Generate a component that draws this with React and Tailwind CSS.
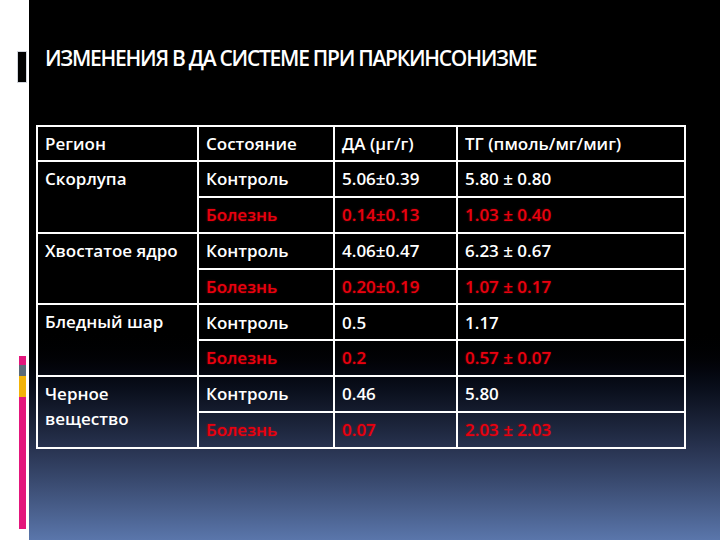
const rows = [
  { region: "Скорлупа", ctrl: ["5.06±0.39", "5.80 ± 0.80"], sick: ["0.14±0.13", "1.03 ± 0.40"] },
  { region: "Хвостатое ядро", ctrl: ["4.06±0.47", "6.23 ± 0.67"], sick: ["0.20±0.19", "1.07 ± 0.17"] },
  { region: "Бледный шар", ctrl: ["0.5", "1.17"], sick: ["0.2", "0.57 ± 0.07"] },
  { region: "Черное вещество", ctrl: ["0.46", "5.80"], sick: ["0.07", "2.03 ± 2.03"] },
];

const cell = "border-2 border-white px-[7px] h-[35.8px] align-middle";
const red = "text-[#e8000f] [text-shadow:0_0_2px_rgba(255,0,0,0.45)]";

export default function App() {
  return (
    <div className="flex h-[540px] w-[720px] overflow-hidden font-['Open_Sans',sans-serif]">
      {/* left white strip with the slide decorations */}
      <div className="flex w-[29px] flex-col items-start bg-white pl-[17px]">
        <div className="mt-[51px] h-[32px] w-[10px] border border-gray-300 bg-black" />
        <div className="ml-[2px] mt-[273px] flex w-[7px] flex-col">
          <div className="h-[9px] bg-[#e3167c]" />
          <div className="h-[11px] bg-[#5b6b78]" />
          <div className="h-[21px] bg-[#f2b308]" />
          <div className="h-[132px] bg-[#e3167c]" />
        </div>
      </div>

      {/* slide */}
      <div className="flex-1 bg-linear-to-b from-black from-60% via-[#283350] via-83% to-[#5a76ab] pl-[7px]">
        <h1 className="ml-[9px] mt-[43px] text-[21px] font-semibold tracking-[-0.06em] text-white">
          ИЗМЕНЕНИЯ В ДА СИСТЕМЕ ПРИ ПАРКИНСОНИЗМЕ
        </h1>

        <table className="mt-[50px] w-[648px] table-fixed border-collapse text-[17px] font-semibold text-white">
          <colgroup>
            <col className="w-[161px]" />
            <col className="w-[136px]" />
            <col className="w-[123px]" />
            <col className="w-[228px]" />
          </colgroup>
          <tbody>
            <tr>
              <td className={cell}>Регион</td>
              <td className={cell}>Состояние</td>
              <td className={cell}>ДА (μг/г)</td>
              <td className={cell}>ТГ (пмоль/мг/миг)</td>
            </tr>
            {rows.map((r) => (
              <>
                <tr key={r.region + "c"}>
                  <td rowSpan={2} className={cell + " !align-top pt-[4px] leading-[25px]"}>
                    {r.region === "Черное вещество" ? (
                      <>
                        Черное
                        <br />
                        вещество
                      </>
                    ) : (
                      r.region
                    )}
                  </td>
                  <td className={cell}>Контроль</td>
                  <td className={cell}>{r.ctrl[0]}</td>
                  <td className={cell}>{r.ctrl[1]}</td>
                </tr>
                <tr key={r.region + "s"}>
                  <td className={cell + " " + red}>Болезнь</td>
                  <td className={cell + " " + red}>{r.sick[0]}</td>
                  <td className={cell + " " + red}>{r.sick[1]}</td>
                </tr>
              </>
            ))}
          </tbody>
        </table>
      </div>
    </div>
  );
}
